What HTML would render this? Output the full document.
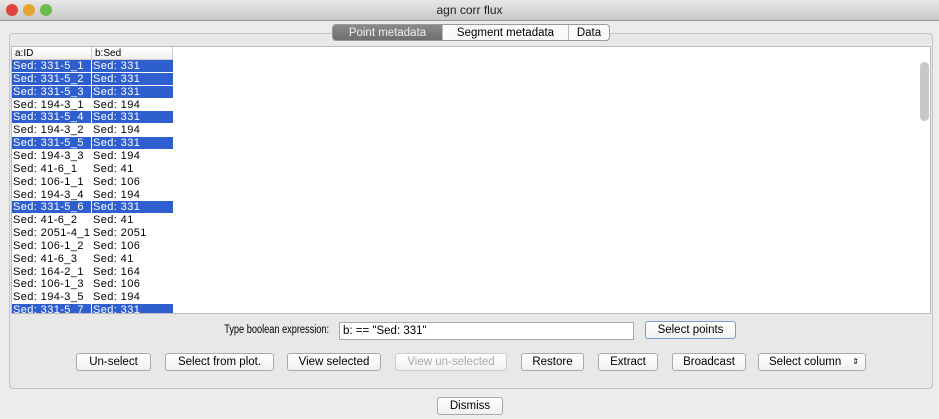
<!DOCTYPE html>
<html><head><style>
*{margin:0;padding:0;box-sizing:border-box}
body{width:939px;height:419px;background:#ececec;font-family:"Liberation Sans",sans-serif;font-size:11px;position:relative;overflow:hidden;color:#000}
.title{position:absolute;left:0;top:0;width:939px;height:21px;background:linear-gradient(#e8e8e8,#c8c8c8);border-bottom:1px solid #999;text-align:center;font-size:12px;line-height:21px;color:#222}
.dot{position:absolute;top:4px;width:12px;height:12px;border-radius:50%}
.panel{position:absolute;left:9px;top:33px;width:924px;height:356px;border:1px solid #c4c4c4;border-radius:4px;background:#e8e8e8}
.tabs{position:absolute;left:332px;top:24px;height:17px;display:flex;border:1px solid #999;border-radius:4px;overflow:hidden;background:#fafafa;font-size:11.5px;line-height:16px}
.tabs div{text-align:center;border-right:1px solid #bbb}
.table{position:absolute;left:11px;top:46px;width:920px;height:268px;background:#fff;border:1px solid #bbb;overflow:hidden}
.hdr{position:absolute;top:0;height:13px;font-size:10px;line-height:13px;border-right:1px solid #ccc;border-bottom:1px solid #ccc;padding-left:3px;background:linear-gradient(#fff,#f0f0f0)}
.row{position:absolute;left:0;height:12px;width:161px;font-size:11px;line-height:12px;letter-spacing:0.4px}
.row span{position:absolute;top:0;height:12px;padding-left:1px;overflow:hidden;white-space:nowrap}
.sel span{background:#2f5fcf;color:#fff}
.btn{position:absolute;height:18px;border:1px solid #aaa;border-radius:3px;background:linear-gradient(#fff,#f0f0f0);text-align:center;font-size:11.5px;line-height:16px}
</style></head><body>
<div class="title">agn corr flux
<div class="dot" style="left:6px;background:#e0443e"></div>
<div class="dot" style="left:23px;background:#e3a530"></div>
<div class="dot" style="left:40px;background:#6bbd4a"></div>
</div>
<div class="panel"></div>
<div class="tabs">
<div style="width:110px;background:linear-gradient(#8a8a8a,#6e6e6e);color:#eee">Point metadata</div>
<div style="width:126px">Segment metadata</div>
<div style="width:40px;border-right:none">Data</div>
</div>
<div class="table">
<div class="hdr" style="left:0;width:80px">a:ID</div>
<div class="hdr" style="left:80px;width:81px">b:Sed</div>
<div style="position:absolute;left:908px;top:15px;width:9px;height:59px;border-radius:5px;background:#c8c8c8"></div>
<div id="rows"></div>
</div>
<div style="position:absolute;right:610px;top:324px;font-size:11.5px;white-space:nowrap;transform:scaleX(0.8);transform-origin:right">Type boolean expression:</div>
<div style="position:absolute;left:339px;top:322px;width:295px;height:18px;border:1px solid #aaa;background:#fff;font-size:11.5px;line-height:16px;padding-left:3px">b: == "Sed: 331"</div>
<div class="btn" style="left:645px;top:321px;width:91px;border-color:#7a9ccc">Select points</div>
<div class="btn" style="left:76px;top:353px;width:75px">Un-select</div>
<div class="btn" style="left:165px;top:353px;width:109px">Select from plot.</div>
<div class="btn" style="left:287px;top:353px;width:94px">View selected</div>
<div class="btn" style="left:395px;top:353px;width:112px;color:#aaa;border-color:#ccc">View un-selected</div>
<div class="btn" style="left:521px;top:353px;width:63px">Restore</div>
<div class="btn" style="left:598px;top:353px;width:60px">Extract</div>
<div class="btn" style="left:672px;top:353px;width:74px">Broadcast</div>
<div class="btn" style="left:758px;top:353px;width:108px;text-align:left;padding-left:10px">Select column<span style="position:absolute;right:6px;font-size:8px">&#8661;</span></div>
<div class="btn" style="left:437px;top:397px;width:66px">Dismiss</div>
<script>
var d=[["331-5_1","331",1],["331-5_2","331",1],["331-5_3","331",1],["194-3_1","194",0],["331-5_4","331",1],["194-3_2","194",0],["331-5_5","331",1],["194-3_3","194",0],["41-6_1","41",0],["106-1_1","106",0],["194-3_4","194",0],["331-5_6","331",1],["41-6_2","41",0],["2051-4_1","2051",0],["106-1_2","106",0],["41-6_3","41",0],["164-2_1","164",0],["106-1_3","106",0],["194-3_5","194",0],["331-5_7","331",1]];
var h="";d.forEach(function(r,i){var t=13+i*12.85;h+='<div class="row'+(r[2]?' sel':'')+'" style="top:'+t+'px"><span style="left:0;width:79px">Sed: '+r[0]+'</span><span style="left:80px;width:81px">Sed: '+r[1]+'</span></div>';});
document.getElementById("rows").innerHTML=h;
</script>
</body></html>
